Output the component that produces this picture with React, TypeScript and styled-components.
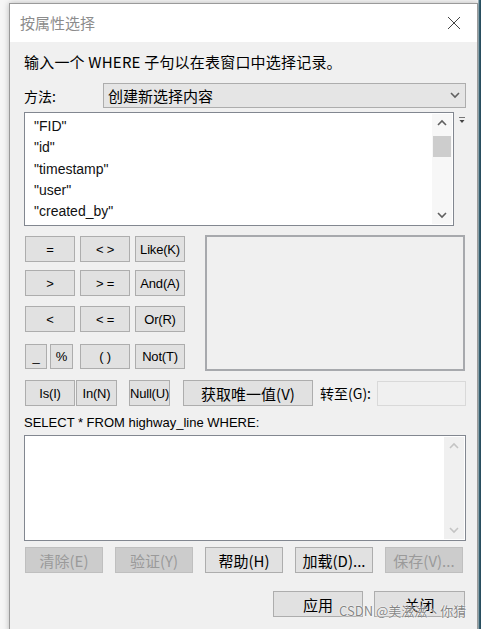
import React from "react";
import styled, { createGlobalStyle } from "styled-components";

const Global = createGlobalStyle`
  html, body { margin: 0; padding: 0; background: #f4f4f4; }
  body { font-family: "Liberation Sans", "Noto Sans CJK SC", sans-serif; }
  * { box-sizing: border-box; }
`;

const Desk = styled.div`
  width: 481px;
  height: 629px;
  position: relative;
  overflow: hidden;
  display: flex;
  padding: 3px 0 0 9px;
  background: linear-gradient(90deg, #f6f6f6 0, #f6f6f6 478px, #3f6f82 479px, #25495a 481px);
`;

const Dialog = styled.div`
  width: 469px;
  height: 630px;
  background: #f0f0f0;
  border: 1px solid #9a9a9a;
  box-shadow: 0 0 6px rgba(0, 0, 0, 0.25);
  display: flex;
  flex-direction: column;
`;

const TitleBar = styled.div`
  height: 38px;
  background: #ffffff;
  display: flex;
  align-items: center;
  justify-content: space-between;
  padding: 0 10px 0 10px;
`;

const Title = styled.span`
  font-family: "Noto Sans CJK SC", sans-serif;
  font-size: 15px;
  color: #8c8c8c;
  margin-top: -1px;
`;

const Close = styled.div`
  width: 26px;
  height: 26px;
  display: flex;
  align-items: center;
  justify-content: center;
`;

const Body = styled.div`
  flex: 1;
  padding: 9px 11px 0 14px;
  display: flex;
  flex-direction: column;
  font-size: 13px;
  color: #000;
`;

const Instruction = styled.div`
  font-family: "Noto Sans CJK SC", sans-serif;
  font-size: 15px;
  line-height: 22px;
  height: 22px;
  letter-spacing: 0.2px;
`;

const MethodRow = styled.div`
  display: flex;
  align-items: center;
  margin-top: 10px;
  height: 25px;
`;

const Label = styled.span<{ $w?: number }>`
  font-family: "Noto Sans CJK SC", sans-serif;
  font-size: 14px;
  width: ${(p) => (p.$w ? `${p.$w}px` : "auto")};
  flex: none;
`;

const Select = styled.div`
  flex: 1;
  height: 25px;
  background: #e5e5e5;
  border: 1px solid #adadad;
  display: flex;
  align-items: center;
  justify-content: space-between;
  padding: 0 5px 0 4px;
  font-family: "Noto Sans CJK SC", sans-serif;
  font-size: 15px;
`;

const FieldRow = styled.div`
  display: flex;
  margin-top: 4px;
  height: 114px;
`;

const FieldList = styled.div`
  width: 430px;
  height: 114px;
  background: #fff;
  border: 1px solid #828790;
  display: flex;
`;

const Items = styled.div`
  flex: 1;
  padding: 3px 0 0 9px;
  display: flex;
  flex-direction: column;
`;

const Item = styled.div`
  height: 21.3px;
  line-height: 21px;
  font-size: 14px;
  color: #111;
`;

const VScroll = styled.div<{ $bg: string }>`
  width: 20px;
  margin: 1px 1px 1px 0;
  background: ${(p) => p.$bg};
  display: flex;
  flex-direction: column;
  align-items: center;
  justify-content: space-between;
  padding: 5px 0;
  position: relative;
`;

const Thumb = styled.div`
  position: absolute;
  left: 1px;
  right: 1px;
  top: 22px;
  height: 21px;
  background: #cdcdcd;
`;

const TinyIcon = styled.div`
  margin-left: 4px;
  margin-top: 1px;
  width: 8px;
  height: 8px;
`;

const Middle = styled.div`
  display: flex;
  margin-top: 9px;
  height: 136px;
`;

const Ops = styled.div`
  width: 162px;
  display: flex;
  flex-direction: column;
  padding-top: 1px;
`;

const OpRow = styled.div<{ $mt: number }>`
  display: flex;
  gap: 5px;
  margin-top: ${(p) => p.$mt}px;
  margin-left: 1px;
`;

const Btn = styled.div<{ $w: number; $h?: number; $disabled?: boolean; $cjk?: boolean }>`
  width: ${(p) => p.$w}px;
  height: ${(p) => p.$h ?? 26}px;
  flex: none;
  display: flex;
  align-items: center;
  justify-content: center;
  white-space: nowrap;
  overflow: hidden;
  background: ${(p) => (p.$disabled ? "#cccccc" : "#e1e1e1")};
  border: 1px solid ${(p) => (p.$disabled ? "#bfbfbf" : "#adadad")};
  color: ${(p) => (p.$disabled ? "#9a9a9a" : "#000")};
  font-size: ${(p) => (p.$cjk ? 15 : 13)}px;
  font-family: ${(p) =>
    p.$cjk ? `"Noto Sans CJK SC", sans-serif` : `"Liberation Sans", "Noto Sans CJK SC", sans-serif`};
  letter-spacing: ${(p) => (p.$cjk ? "0px" : "-0.2px")};
`;

const ValueBox = styled.div`
  margin-left: 19px;
  width: 260px;
  height: 136px;
  border: 2px solid #a7a9ad;
  background: #f0f0f0;
`;

const Row5 = styled.div`
  display: flex;
  align-items: center;
  margin-top: 9px;
  height: 26px;
  padding-left: 1px;
`;

const Gap = styled.div<{ $w: number }>`
  width: ${(p) => p.$w}px;
  flex: none;
`;

const GotoInput = styled.div`
  width: 89px;
  height: 25px;
  margin-left: 6px;
  border: 1px solid #d9d9d9;
  background: #f0f0f0;
`;

const SqlLabel = styled.div`
  margin-top: 9px;
  font-size: 13px;
  line-height: 16px;
  height: 16px;
`;

const ExprBox = styled.div`
  margin-top: 4px;
  width: 442px;
  height: 106px;
  background: #fff;
  border: 1px solid #828790;
  display: flex;
  justify-content: flex-end;
`;

const BtnRow = styled.div<{ $mt: number; $gap: number; $justify?: string }>`
  display: flex;
  gap: ${(p) => p.$gap}px;
  margin-top: ${(p) => p.$mt}px;
  padding-left: 1px;
  justify-content: ${(p) => p.$justify ?? "flex-start"};
  padding-right: 1px;
`;

const Watermark = styled.div`
  position: absolute;
  left: 339px;
  top: 601px;
  font-family: "Noto Sans CJK SC", sans-serif;
  font-size: 13px;
  color: rgba(110, 110, 110, 0.85);
  text-shadow: 0 0 2px #fff, 0 0 1px #fff;
  white-space: nowrap;
`;

const Chevron = ({ up, color }: { up?: boolean; color: string }) => (
  <svg width="10" height="7" viewBox="0 0 10 7">
    <path
      d={up ? "M1 6 L5 2 L9 6" : "M1 1 L5 5 L9 1"}
      fill="none"
      stroke={color}
      strokeWidth="1.6"
    />
  </svg>
);

export default function App() {
  const fields = ['"FID"', '"id"', '"timestamp"', '"user"', '"created_by"'];
  return (
    <>
      <Global />
      <Desk>
        <Dialog>
          <TitleBar>
            <Title>按属性选择</Title>
            <Close>
              <svg width="14" height="14" viewBox="0 0 14 14">
                <path d="M1 1 L13 13 M13 1 L1 13" stroke="#444" strokeWidth="1" fill="none" />
              </svg>
            </Close>
          </TitleBar>
          <Body>
            <Instruction>输入一个 WHERE 子句以在表窗口中选择记录。</Instruction>
            <MethodRow>
              <Label $w={79}>方法:</Label>
              <Select>
                <span>创建新选择内容</span>
                <Chevron color="#606060" />
              </Select>
            </MethodRow>
            <FieldRow>
              <FieldList>
                <Items>
                  {fields.map((f) => (
                    <Item key={f}>{f}</Item>
                  ))}
                </Items>
                <VScroll $bg="#f7f7f7">
                  <Chevron up color="#606060" />
                  <Thumb />
                  <Chevron color="#606060" />
                </VScroll>
              </FieldList>
              <TinyIcon>
                <svg width="8" height="8" viewBox="0 0 8 8">
                  <path d="M1 0.5 H7" stroke="#777" strokeWidth="1" />
                  <path d="M1.5 3 H6.5 L4 6 Z" fill="#444" />
                </svg>
              </TinyIcon>
            </FieldRow>
            <Middle>
              <Ops>
                <OpRow $mt={0}>
                  <Btn $w={50}>=</Btn>
                  <Btn $w={50}>&lt; &gt;</Btn>
                  <Btn $w={50}>Like(K)</Btn>
                </OpRow>
                <OpRow $mt={8}>
                  <Btn $w={50}>&gt;</Btn>
                  <Btn $w={50}>&gt; =</Btn>
                  <Btn $w={50}>And(A)</Btn>
                </OpRow>
                <OpRow $mt={10}>
                  <Btn $w={50}>&lt;</Btn>
                  <Btn $w={50}>&lt; =</Btn>
                  <Btn $w={50}>Or(R)</Btn>
                </OpRow>
                <OpRow $mt={12}>
                  <Btn $w={22} $h={25}>_</Btn>
                  <Btn $w={23} $h={25} style={{ marginLeft: -2 }}>%</Btn>
                  <Btn $w={50} $h={25} style={{ marginLeft: 2 }}>( )</Btn>
                  <Btn $w={50} $h={25}>Not(T)</Btn>
                </OpRow>
              </Ops>
              <ValueBox />
            </Middle>
            <Row5>
              <Btn $w={50}>Is(I)</Btn>
              <Gap $w={1} />
              <Btn $w={41}>In(N)</Btn>
              <Gap $w={12} />
              <Btn $w={41}>Null(U)</Btn>
              <Gap $w={13} />
              <Btn $w={130} $cjk>获取唯一值(V)</Btn>
              <Gap $w={7} />
              <Label>转至(G):</Label>
              <GotoInput />
            </Row5>
            <SqlLabel>SELECT * FROM highway_line WHERE:</SqlLabel>
            <ExprBox>
              <VScroll $bg="#f0f0f0">
                <Chevron up color="#c4c4c4" />
                <Chevron color="#c4c4c4" />
              </VScroll>
            </ExprBox>
            <BtnRow $mt={6} $gap={12}>
              <Btn $w={78} $disabled $cjk>清除(E)</Btn>
              <Btn $w={78} $disabled $cjk>验证(Y)</Btn>
              <Btn $w={78} $cjk>帮助(H)</Btn>
              <Btn $w={78} $cjk>加载(D)...</Btn>
              <Btn $w={78} $disabled $cjk>保存(V)...</Btn>
            </BtnRow>
            <BtnRow $mt={18} $gap={11} $justify="flex-end">
              <Btn $w={90} $cjk>应用</Btn>
              <Btn $w={91} $cjk>关闭</Btn>
            </BtnRow>
          </Body>
        </Dialog>
        <Watermark>CSDN @美滋滋丶你猜</Watermark>
      </Desk>
    </>
  );
}
